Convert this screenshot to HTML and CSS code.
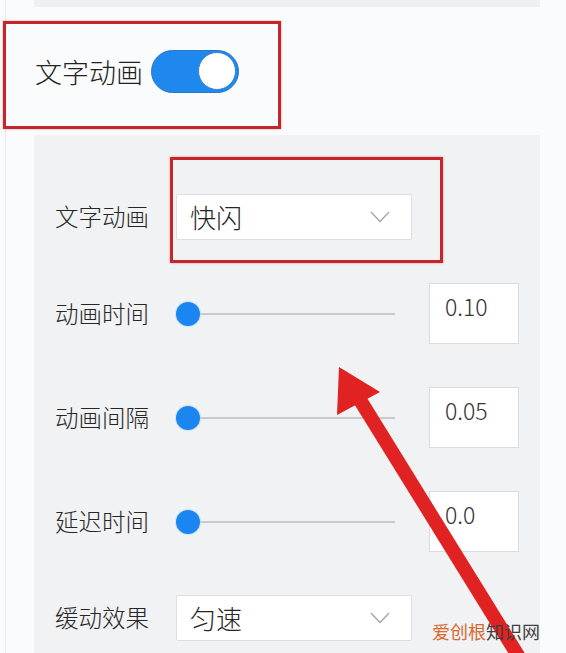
FILE: index.html
```html
<!DOCTYPE html>
<html lang="zh">
<head>
<meta charset="utf-8">
<title>文字动画</title>
<link rel="stylesheet" href="styles.css">
</head>
<body>
<div class="page">
  <div class="frame">
    <div class="top-strip"></div>
    <div class="toggle-section">
      <span class="toggle-label">文字动画</span>
      <span class="switch"><span class="switch-knob"></span></span>
    </div>
    <div class="panel">
      <div class="row">
        <span class="label">文字动画</span>
        <div class="select">
          <span class="select-text">快闪</span>
          <svg class="chevron" width="20" height="12" viewBox="0 0 20 12"><polyline points="1,1 10,10.5 19,1" fill="none" stroke="#a3a5a9" stroke-width="1.3"/></svg>
        </div>
      </div>
      <div class="row">
        <span class="label">动画时间</span>
        <div class="slider"><span class="knob"></span><span class="track"></span></div>
        <div class="num-input">0.10</div>
      </div>
      <div class="row">
        <span class="label">动画间隔</span>
        <div class="slider"><span class="knob"></span><span class="track"></span></div>
        <div class="num-input">0.05</div>
      </div>
      <div class="row">
        <span class="label">延迟时间</span>
        <div class="slider"><span class="knob"></span><span class="track"></span></div>
        <div class="num-input">0.0</div>
      </div>
      <div class="row">
        <span class="label">缓动效果</span>
        <div class="select">
          <span class="select-text">匀速</span>
          <svg class="chevron" width="20" height="12" viewBox="0 0 20 12"><polyline points="1,1 10,10.5 19,1" fill="none" stroke="#a3a5a9" stroke-width="1.3"/></svg>
        </div>
      </div>
    </div>
  </div>

  <div class="mark mark-toggle"></div>
  <div class="mark mark-select"></div>
  <svg class="arrow" width="566" height="653" viewBox="0 0 566 653">
    <line x1="360" y1="400" x2="522" y2="662" stroke="#e12222" stroke-width="14"/>
    <polygon points="339,367 380,392 337,415" fill="#e12222"/>
  </svg>
  <div class="watermark"><span class="wm-orange">爱创根</span><span class="wm-gray">知识网</span></div>
</div>
</body>
</html>
```

FILE: styles.css
```css
* { box-sizing: border-box; }

html, body {
  margin: 0;
  padding: 0;
  background: #fafbfc;
}

body {
  font-family: "Noto Sans CJK SC", "Noto Sans", sans-serif;
  font-weight: 300;
  color: #2b2b2b;
}

.page {
  position: relative;
  width: 566px;
  height: 653px;
  overflow: hidden;
}

.frame {
  margin-left: 5px;
  border-left: 1px solid #e8e9ec;
  padding-left: 28px;
  width: 535px;
  height: 653px;
  display: flex;
  flex-direction: column;
}

.top-strip {
  height: 7px;
  background: #eef0f2;
  width: 506px;
}

.toggle-section {
  height: 128px;
  display: flex;
  align-items: center;
  padding-left: 1px;
  gap: 8px;
}

.toggle-label {
  font-size: 27px;
  line-height: 1;
  color: #222222;
}

.switch {
  width: 88px;
  height: 43px;
  border-radius: 22px;
  background: #1e88ef;
  border: 1px solid #2a77c9;
  display: flex;
  align-items: center;
  justify-content: flex-end;
  padding-right: 2px;
}

.switch-knob {
  width: 38px;
  height: 38px;
  border-radius: 50%;
  background: #ffffff;
  border: 1px solid #3a86d6;
}

.panel {
  flex: 1;
  width: 506px;
  background: #f1f2f4;
  padding: 59px 0 0 21px;
  display: flex;
  flex-direction: column;
  gap: 43px;
}

.row {
  display: flex;
  align-items: center;
}

.label {
  width: 121px;
  font-size: 23.5px;
  line-height: 1;
  color: #262626;
  flex-shrink: 0;
}

.select {
  width: 236px;
  height: 46px;
  background: #ffffff;
  border: 1px solid #dcdee2;
  border-radius: 2px;
  display: flex;
  align-items: center;
  justify-content: space-between;
  padding: 0 21px 0 13px;
}

.select-text {
  font-size: 26px;
  line-height: 1;
  color: #262626;
}

.chevron {
  display: block;
}

.slider {
  width: 219px;
  display: flex;
  align-items: center;
}

.knob {
  width: 24px;
  height: 24px;
  border-radius: 50%;
  background: #1b85f0;
  box-shadow: 0 0 0 1px rgba(27, 133, 240, 0.15);
  flex-shrink: 0;
}

.track {
  flex: 1;
  height: 2px;
  background: #c8cacd;
}

.num-input {
  margin-left: 34px;
  width: 90px;
  height: 61px;
  background: #ffffff;
  border: 1px solid #d9dbdf;
  padding: 9px 0 0 15px;
  font-size: 23px;
  line-height: 1.2;
  color: #333333;
}

.mark {
  position: absolute;
  border: 3px solid #c4262c;
  box-shadow: 0 0 2px rgba(230, 80, 80, 0.6);
}

.mark-toggle {
  left: 3px;
  top: 21px;
  width: 278px;
  height: 108px;
}

.mark-select {
  left: 170px;
  top: 157px;
  width: 273px;
  height: 106px;
}

.arrow {
  position: absolute;
  left: 0;
  top: 0;
}

.watermark {
  position: absolute;
  left: 432px;
  top: 621px;
  font-size: 18px;
  font-weight: 400;
  line-height: 1.2;
  white-space: nowrap;
}

.wm-orange { color: #d9692e; }
.wm-gray { color: #3e3e3e; }
```
